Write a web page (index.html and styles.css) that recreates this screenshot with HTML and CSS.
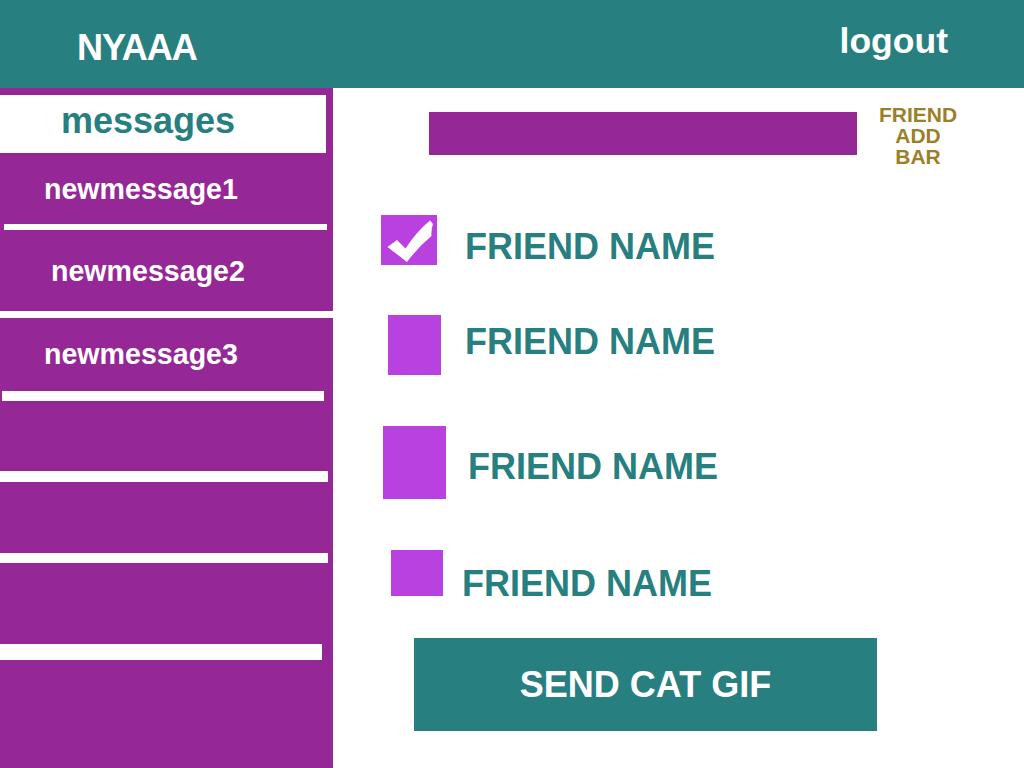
FILE: index.html
```html
<!DOCTYPE html>
<html>
<head>
<meta charset="utf-8">
<title>NYAAA</title>
<link rel="stylesheet" href="styles.css">
</head>
<body>
<header class="topbar">
  <div class="brand">NYAAA</div>
  <div class="logout">logout</div>
</header>
<div class="layout">
  <aside class="sidebar">
    <div class="msg-title">messages</div>
    <div class="msg-row row-1"><span class="msg-text">newmessage1</span></div>
    <div class="sep sep-1"></div>
    <div class="msg-row row-2"><span class="msg-text indent">newmessage2</span></div>
    <div class="sep sep-2"></div>
    <div class="msg-row row-3"><span class="msg-text">newmessage3</span></div>
    <div class="sep sep-3"></div>
    <div class="msg-row row-4"></div>
    <div class="sep sep-4"></div>
    <div class="msg-row row-5"></div>
    <div class="sep sep-5"></div>
    <div class="msg-row row-6"></div>
    <div class="sep sep-6"></div>
  </aside>
  <main class="main">
    <div class="add-row">
      <div class="add-bar"></div>
      <div class="add-label">FRIEND<br>ADD<br>BAR</div>
    </div>
    <div class="friend f1">
      <div class="slot"><div class="box box-1">
        <svg width="56" height="50" viewBox="0 0 56 50"><path d="M6.5 32 L16 25 L24.5 33.5 Q36 16 49 5.5 L52 9 Q50 14 50.5 21 Q37 32 26 47 Z" fill="#ffffff"/></svg>
      </div></div>
      <div class="name">FRIEND NAME</div>
    </div>
    <div class="friend f2">
      <div class="slot"><div class="box box-2"></div></div>
      <div class="name">FRIEND NAME</div>
    </div>
    <div class="friend f3">
      <div class="slot"><div class="box box-3"></div></div>
      <div class="name">FRIEND NAME</div>
    </div>
    <div class="friend f4">
      <div class="slot"><div class="box box-4"></div></div>
      <div class="name">FRIEND NAME</div>
    </div>
    <div class="send">SEND CAT GIF</div>
  </main>
</div>
</body>
</html>
```
FILE: styles.css
```css
* { box-sizing: border-box; }
html, body { margin: 0; padding: 0; }
body {
  width: 1024px;
  height: 768px;
  overflow: hidden;
  background: #ffffff;
  font-family: "Liberation Sans", Arial, sans-serif;
  font-weight: bold;
}

.topbar {
  height: 88px;
  background: #287f80;
  color: #ffffff;
  display: flex;
  justify-content: space-between;
}
.brand {
  font-size: 36px;
  letter-spacing: -1px;
  line-height: 40px;
  margin: 28px 0 0 77px;
}
.logout {
  font-size: 35.5px;
  line-height: 40px;
  margin: 21px 76px 0 0;
}

.layout {
  display: flex;
  height: 680px;
}

.sidebar {
  width: 333px;
  flex: none;
  background: #952896;
  padding-top: 7px;
  display: flex;
  flex-direction: column;
}
.msg-title {
  width: 326px;
  height: 58px;
  background: #ffffff;
  color: #287f80;
  font-size: 36px;
  line-height: 52px;
  padding-left: 61px;
}
.msg-row {
  display: flex;
  align-items: center;
  color: #ffffff;
  font-size: 28.6px;
}
.msg-text { margin-left: 44px; margin-top: 1px; }
.msg-text.indent { margin-left: 51px; margin-top: 1px; }
.row-3 .msg-text { margin-top: -1px; }
.row-1 { height: 71px; }
.row-2 { height: 81px; }
.row-3 { height: 73px; }
.row-4 { height: 70px; }
.row-5 { height: 71px; }
.row-6 { height: 81px; }

.sep { background: #ffffff; }
.sep-1 { height: 6px; margin-left: 4px; width: 323px; }
.sep-2 { height: 7px; width: 333px; }
.sep-3 { height: 10px; margin-left: 2px; width: 322px; }
.sep-4 { height: 11px; width: 328px; }
.sep-5 { height: 10px; width: 328px; }
.sep-6 { height: 16px; width: 322px; }

.main {
  flex: 1;
  display: flex;
  flex-direction: column;
}
.add-row {
  display: flex;
  align-items: flex-start;
  padding-left: 96px;
}
.add-bar {
  width: 428px;
  height: 43px;
  margin-top: 24px;
  background: #952896;
}
.add-label {
  width: 122px;
  margin-top: 16px;
  text-align: center;
  color: #9b7f2a;
  font-size: 21px;
  line-height: 21px;
}

.friend {
  display: flex;
  align-items: flex-start;
  padding-left: 48px;
}
.f1 { margin-top: 48px; height: 52px; }
.f2 { margin-top: 48px; height: 60px; }
.f3 { margin-top: 51px; height: 73px; }
.f4 { margin-top: 51px; height: 54px; }

.slot { width: 85px; flex: none; }
.box { background: #b941df; }
.box svg { display: block; }
.box-1 { width: 56px; height: 50px; }
.box-2 { width: 53px; height: 60px; margin-left: 7px; }
.box-3 { width: 63px; height: 73px; margin-left: 2px; }
.box-4 { width: 52px; height: 46px; margin-left: 10px; }

.name {
  color: #287f80;
  font-size: 36px;
  line-height: 40px;
}
.f1 .name { margin-top: 12px; margin-left: -1px; }
.f2 .name { margin-top: 7px; margin-left: -1px; }
.f3 .name { margin-top: 21px; margin-left: 2px; }
.f4 .name { margin-top: 14px; margin-left: -4px; }

.send {
  margin: 34px 0 0 81px;
  width: 463px;
  height: 93px;
  background: #287f80;
  color: #ffffff;
  font-size: 36px;
  display: flex;
  align-items: center;
  justify-content: center;
}
```
